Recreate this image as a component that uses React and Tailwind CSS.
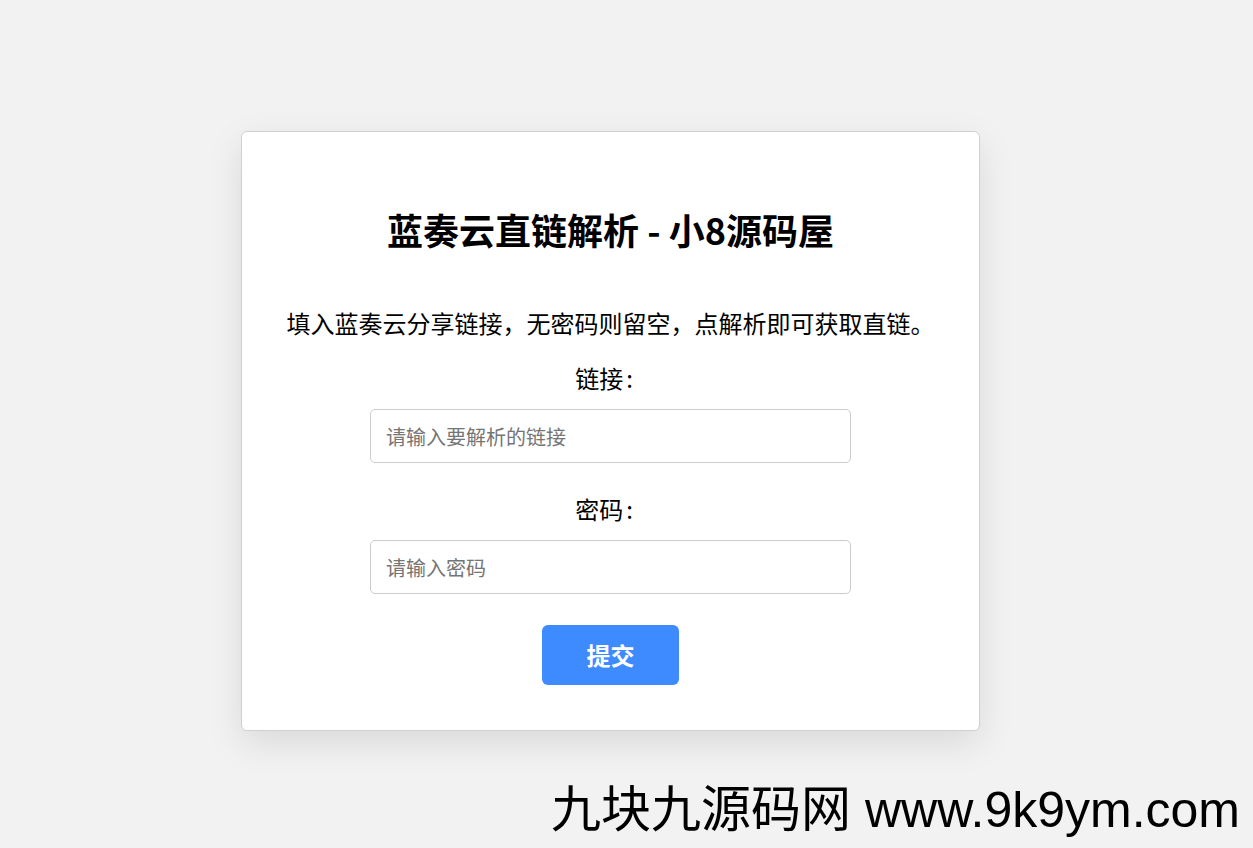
import React, { useState } from 'react'

const cjk = { fontFamily: '"Noto Sans CJK SC", "Noto Sans", sans-serif' }

const Field = ({ label, placeholder, value, onChange, first }) => (
  <>
    <label className={`block text-center text-[24px] leading-[36px] text-black ${first ? 'mt-[19px]' : 'mt-[28px]'}`}>
      {label}
      <span className="ml-[3px] mr-[13px]">:</span>
    </label>
    <input
      type="text"
      value={value}
      onChange={(e) => onChange(e.target.value)}
      placeholder={placeholder}
      className="mx-auto mt-[13px] block h-[54px] w-[481px] rounded-[5px] border border-[#cccccc] bg-white px-[15px] text-[20px] text-black outline-none placeholder:text-[#757575]"
    />
  </>
)

export default function App() {
  const [url, setUrl] = useState('')
  const [pwd, setPwd] = useState('')

  return (
    <div className="relative h-[848px] w-full overflow-hidden bg-[#f2f2f2]" style={cjk}>
      {/* Card */}
      <div className="ml-[241px] mt-[131px] w-[739px] rounded-[6px] border border-[#d0d0d0] bg-white pb-[45px] pt-[70px] shadow-[0_12px_36px_rgba(0,0,0,0.10)]">
        <h1 className="text-center text-[36px] font-bold leading-[54px] text-black">
          蓝奏云直链解析 - 小8源码屋
        </h1>
        <p className="mt-[49px] text-center text-[24px] leading-[36px] text-black">
          填入蓝奏云分享链接，无密码则留空，点解析即可获取直链。
        </p>

        <Field first label="链接" placeholder="请输入要解析的链接" value={url} onChange={setUrl} />
        <Field label="密码" placeholder="请输入密码" value={pwd} onChange={setPwd} />

        <button className="mx-auto mt-[31px] block h-[60px] w-[137px] rounded-[6px] bg-[#3e8bff] text-[24px] font-bold text-white">
          提交
        </button>
      </div>

      {/* Watermark */}
      <div
        className="absolute bottom-[6px] right-[13px] whitespace-nowrap text-[50px] leading-[64px] text-black"
        style={{ fontFamily: '"Liberation Sans", "Noto Sans CJK SC", sans-serif' }}
      >
        九块九源码网 www.9k9ym.com
      </div>
    </div>
  )
}
